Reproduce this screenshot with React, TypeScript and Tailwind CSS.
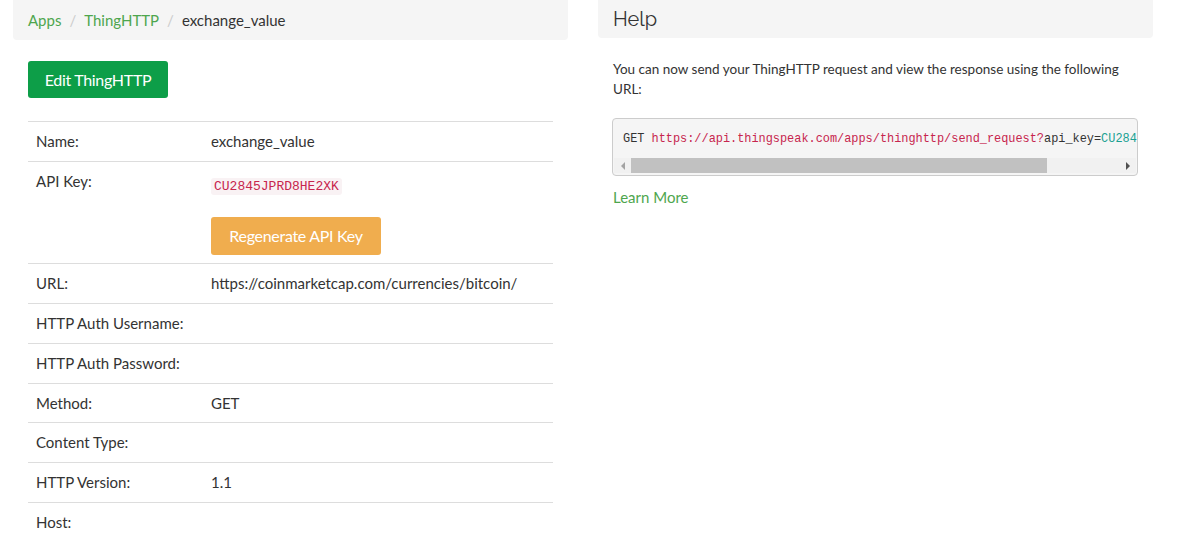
const sans = "font-['Source_Sans_Pro','Lato','Liberation_Sans',sans-serif]";
const mono = "font-['Liberation_Mono','DejaVu_Sans_Mono',monospace]";

const rows: { label: string; value?: string }[] = [
  { label: 'URL:', value: 'https://coinmarketcap.com/currencies/bitcoin/' },
  { label: 'HTTP Auth Username:' },
  { label: 'HTTP Auth Password:' },
  { label: 'Method:', value: 'GET' },
  { label: 'Content Type:' },
  { label: 'HTTP Version:', value: '1.1' },
  { label: 'Host:' },
];

function Row({ label, children }: { label: string; children?: React.ReactNode }) {
  return (
    <div className="flex border-t border-[#dddddd]">
      <div className="w-[175px] shrink-0 px-2 py-[8px] leading-[22.8px]">{label}</div>
      <div className="px-2 py-[8px] leading-[22.8px]">{children}</div>
    </div>
  );
}

export default function App() {
  return (
    <div className={`min-h-screen bg-white text-[#333333] ${sans} text-[15px]`}>
      <div className="flex gap-[30px] pl-[13px]">
        {/* left column */}
        <div className="w-[555px]">
          <div className="h-[40px] bg-[#f5f5f5] rounded-b-[4px] flex items-center px-[15px] text-[15px]">
            <span className="text-[#4ea64e]">Apps</span>
            <span className="text-[#cccccc] px-[8px]">/</span>
            <span className="text-[#4ea64e]">ThingHTTP</span>
            <span className="text-[#cccccc] px-[8px]">/</span>
            <span>exchange_value</span>
          </div>
          <div className="px-[15px]">
            <button className="mt-[21px] w-[140px] h-[37px] rounded-[3px] bg-[#0d9e48] text-white text-[16px] font-['Lato',sans-serif] tracking-[-0.3px]">
              Edit ThingHTTP
            </button>
            <div className="mt-[23px]">
              <Row label="Name:">exchange_value</Row>
              <div className="flex border-t border-[#dddddd]">
                <div className="w-[175px] shrink-0 px-2 py-[8px] leading-[22.8px]">API Key:</div>
                <div className="px-2 pt-[11px] pb-[8px]">
                  <code className={`${mono} text-[13px] text-[#c7254e] bg-[#f9f2f4] rounded-[3px] px-[3px] py-[1px]`}>
                    CU2845JPRD8HE2XK
                  </code>
                  <div className="mt-[21px]">
                    <button className="w-[170px] h-[38px] rounded-[3px] bg-[#f0ad4e] text-white text-[16px] font-['Lato',sans-serif] tracking-[-0.3px]">
                      Regenerate API Key
                    </button>
                  </div>
                </div>
              </div>
              {rows.map((r) => (
                <Row key={r.label} label={r.label}>
                  {r.value}
                </Row>
              ))}
            </div>
          </div>
        </div>

        {/* right column */}
        <div className="w-[555px]">
          <div className="h-[38px] bg-[#f5f5f5] rounded-b-[4px] flex items-center px-[15px]">
            <span className="text-[20px] font-['Raleway','Lato',sans-serif] text-[#333333]">Help</span>
          </div>
          <div className="px-[14px]">
            <p className="mt-[21px] text-[13.5px] leading-[20px] pl-px">
              You can now send your ThingHTTP request and view the response using the following URL:
            </p>
            <div className="mt-[19px] w-[526px] border border-[#cccccc] rounded-[4px] bg-[#f5f5f5] overflow-hidden">
              <div className={`${mono} text-[11.9px] whitespace-nowrap overflow-hidden pl-[10px] pt-[12px] leading-[17px]`}>
                GET <span className="text-[#c7254e]">https://api.thingspeak.com/apps/thinghttp/send_request?</span>
                api_key=<span className="text-[#1aa192]">CU2845JPRD8HE2XK</span>
              </div>
              <div className="mt-[10px] mb-[2px] mx-px h-[15px] flex items-center bg-[#f1f1f1]">
                <div className="w-[17px] flex justify-center">
                  <div className="w-0 h-0 border-y-[4px] border-y-transparent border-r-[4px] border-r-[#a3a3a3]" />
                </div>
                <div className="flex-1 h-full">
                  <div className="w-[416px] h-full bg-[#c1c1c1]" />
                </div>
                <div className="w-[17px] flex justify-center">
                  <div className="w-0 h-0 border-y-[4px] border-y-transparent border-l-[4px] border-l-[#505050]" />
                </div>
              </div>
            </div>
            <div className="mt-[10px] pl-px text-[#4ea64e] text-[15px]">Learn More</div>
          </div>
        </div>
      </div>
    </div>
  );
}
